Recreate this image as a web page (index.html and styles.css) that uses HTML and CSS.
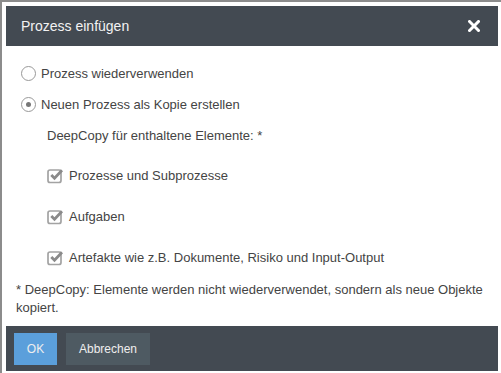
FILE: index.html
```html
<!DOCTYPE html>
<html lang="de">
<head>
	<meta charset="UTF-8">
	<title>Prozess einfügen</title>
	<link rel="stylesheet" href="styles.css">
</head>
<body>
	<div class="dialog">
		<div class="header">
			<span class="title">Prozess einfügen</span>
			<a href="javascript:;" class="close">
				<svg width="12" height="12" viewBox="0 0 12 12"><path d="M1.5 1.5L10.5 10.5M10.5 1.5L1.5 10.5" stroke="#fff" stroke-width="3" stroke-linecap="square"/></svg>
			</a>
		</div>
		<div class="content">
			<label class="radio"><span class="ring"></span>Prozess wiederverwenden</label>
			<label class="radio"><span class="ring checked"></span>Neuen Prozess als Kopie erstellen</label>
			<div class="sub">
				<p class="caption">DeepCopy für enthaltene Elemente: *</p>
				<label class="check">
					<svg width="17" height="17" viewBox="0 0 17 17"><rect x="1" y="3" width="13" height="12.5" rx="2" fill="none" stroke="#a3a3a3" stroke-width="1.7"/><path d="M4.3 8L7.5 11.2L15 3.3" fill="none" stroke="#8a8a8a" stroke-width="2.8"/></svg>
					Prozesse und Subprozesse
				</label>
				<label class="check">
					<svg width="17" height="17" viewBox="0 0 17 17"><rect x="1" y="3" width="13" height="12.5" rx="2" fill="none" stroke="#a3a3a3" stroke-width="1.7"/><path d="M4.3 8L7.5 11.2L15 3.3" fill="none" stroke="#8a8a8a" stroke-width="2.8"/></svg>
					Aufgaben
				</label>
				<label class="check">
					<svg width="17" height="17" viewBox="0 0 17 17"><rect x="1" y="3" width="13" height="12.5" rx="2" fill="none" stroke="#a3a3a3" stroke-width="1.7"/><path d="M4.3 8L7.5 11.2L15 3.3" fill="none" stroke="#8a8a8a" stroke-width="2.8"/></svg>
					Artefakte wie z.B. Dokumente, Risiko und Input-Output
				</label>
			</div>
			<p class="note">* DeepCopy: Elemente werden nicht wiederverwendet, sondern als neue Objekte kopiert.</p>
		</div>
		<div class="footer">
			<a href="javascript:;" class="btn ok">OK</a>
			<a href="javascript:;" class="btn cancel">Abbrechen</a>
		</div>
	</div>
</body>
</html>
```

FILE: styles.css
```css
*{
	margin: 0;
	padding: 0;
}
body{
	background-color: #8c8c8c;
	font-family: "Liberation Sans", Arial, sans-serif;
	font-size: 13px;
	color: #444;
}
.dialog{
	margin: 2px 0 0 2px;
	padding: 4px 3px 2px 4px;
	background-color: #fff;
}
.header{
	height: 40px;
	padding: 0 18px 0 15px;
	background-color: #434a52;
	display: flex;
	align-items: center;
	justify-content: space-between;
}
.header .title{
	color: #f2f2f2;
	font-size: 14px;
}
.header .close{
	display: flex;
}
.content{
	height: 280px;
	padding: 0 10px;
	display: flex;
	flex-direction: column;
}
.radio{
	display: flex;
	align-items: center;
	height: 31px;
}
.radio:first-child{
	margin-top: 12px;
}
.ring{
	width: 13px;
	height: 13px;
	border: 1px solid #999;
	border-radius: 50%;
	margin: 0 5px 0 5px;
	display: flex;
	align-items: center;
	justify-content: center;
}
.ring.checked::after{
	content: "";
	width: 5px;
	height: 5px;
	border-radius: 50%;
	background-color: #777;
}
.sub{
	padding-left: 31px;
}
.caption{
	height: 31px;
	line-height: 31px;
}
.check{
	display: flex;
	align-items: center;
	height: 41px;
}
.check:first-of-type{
	margin-top: 4px;
}
.check svg{
	margin-right: 5px;
}
.note{
	margin-top: auto;
	padding: 0 0 9px 0;
	line-height: 18px;
}
.footer{
	height: 45px;
	padding: 7px 8px 0;
	box-sizing: border-box;
	background-color: #434a52;
	display: flex;
	align-items: flex-start;
	gap: 9px;
}
.btn{
	height: 32px;
	line-height: 32px;
	padding: 0 13px;
	color: #eee;
	text-decoration: none;
	font-size: 12px;
}
.btn.ok{
	width: 43px;
	box-sizing: border-box;
	text-align: center;
	padding: 0;
	background-color: #5b9fdb;
}
.btn.cancel{
	background-color: #4e5a62;
}
```
